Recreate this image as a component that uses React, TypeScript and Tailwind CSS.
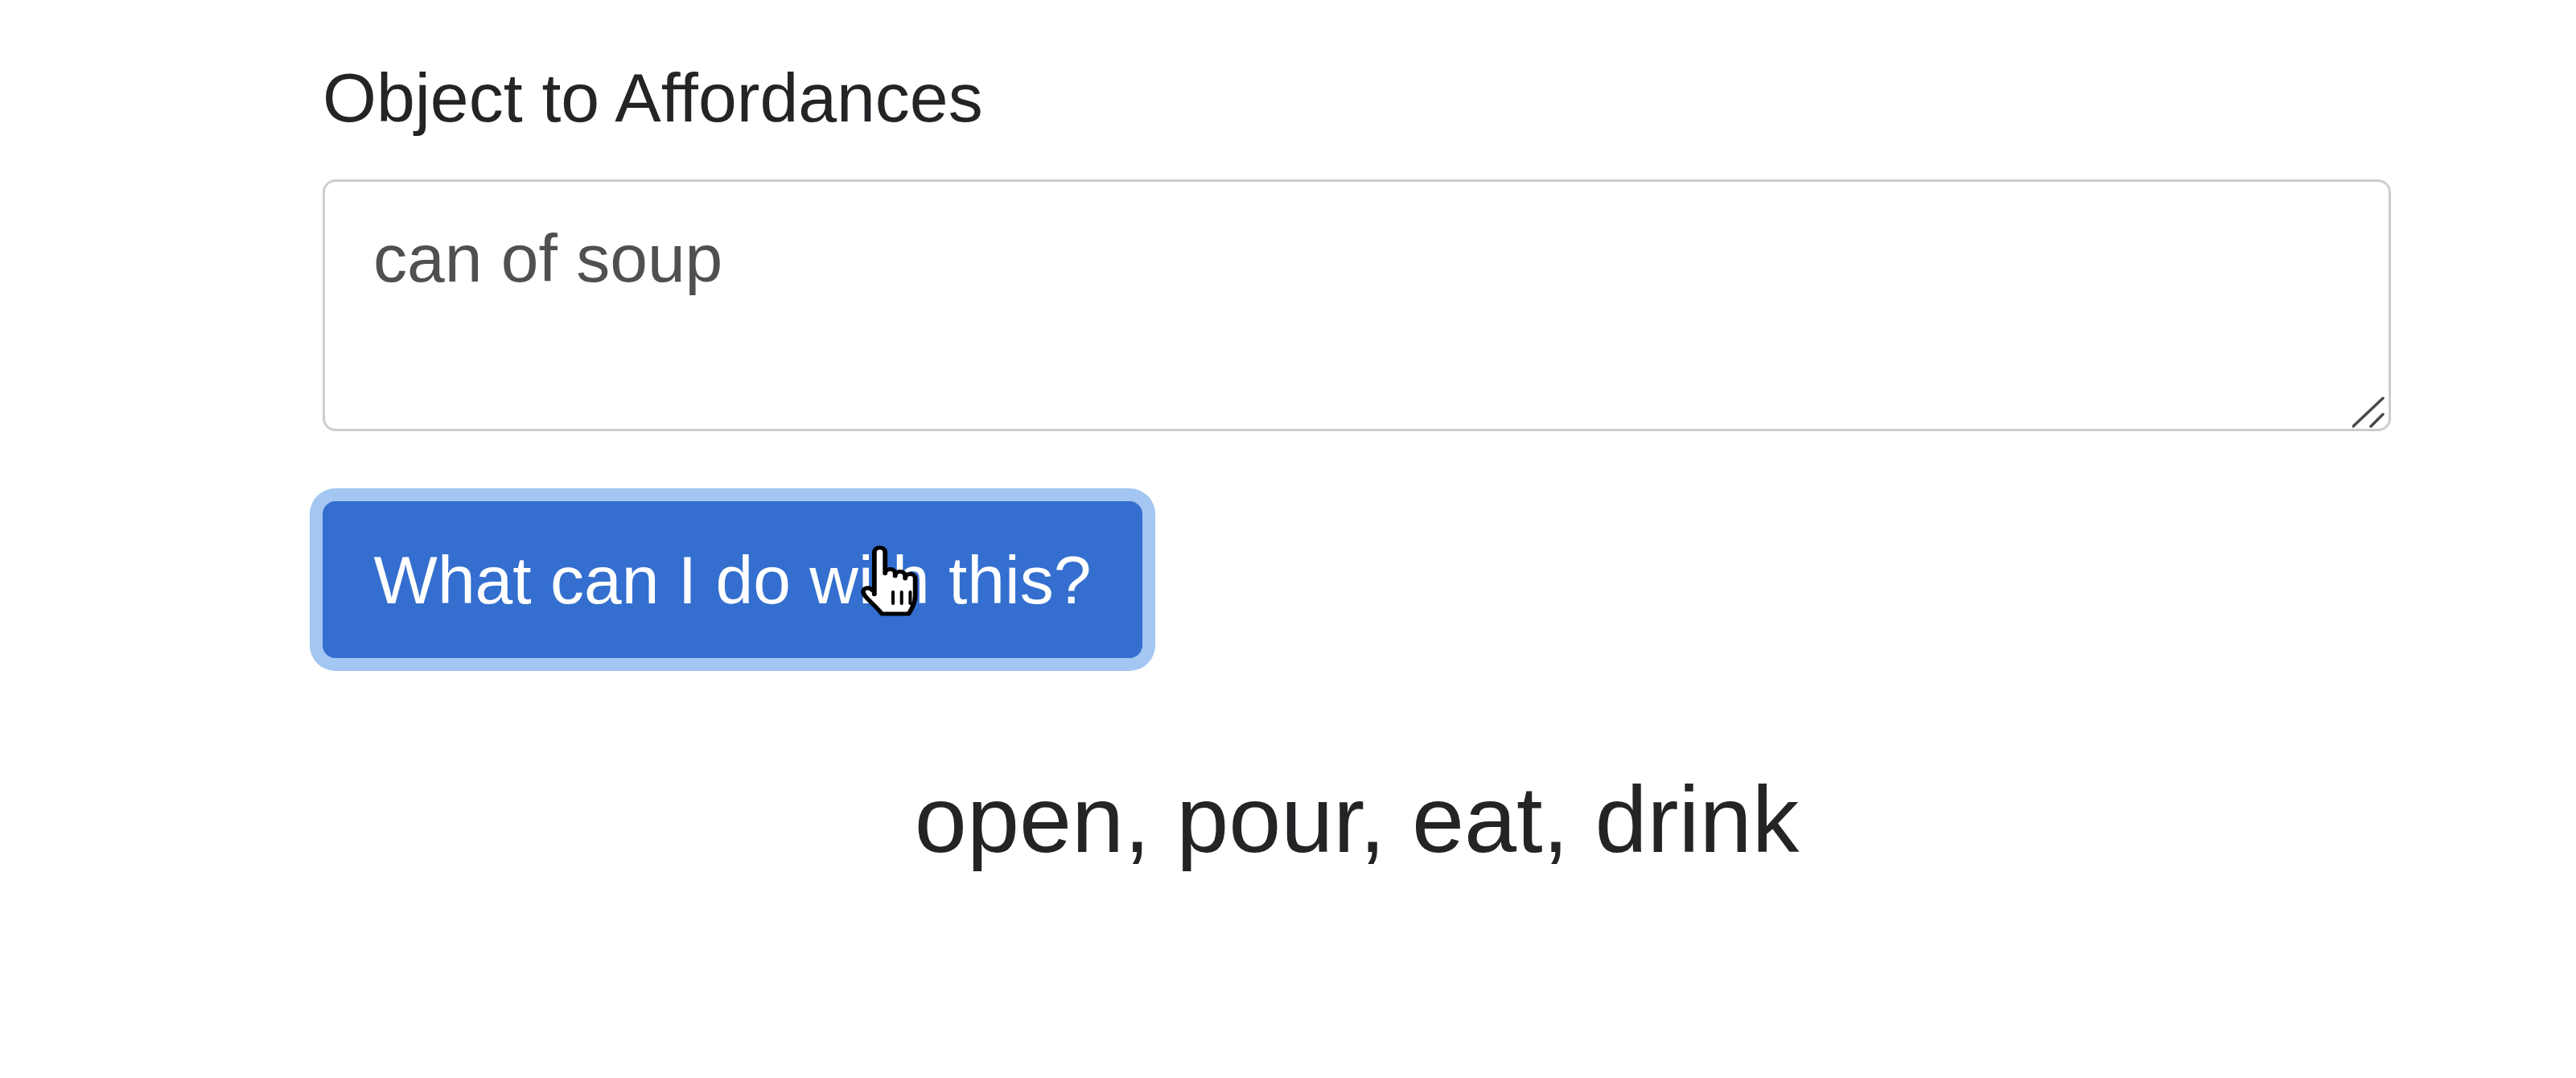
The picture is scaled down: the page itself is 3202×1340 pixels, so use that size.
import React from "react";

function HandCursor() {
  return (
    <svg
      className="absolute left-[668px] top-[55px] pointer-events-none"
      width="74"
      height="88"
      viewBox="1.2 0.1 16.6 23"
      preserveAspectRatio="none"
      fill="none"
    >
      <path
        d="M5.2 2.3 a1.5 1.5 0 0 1 3 0 V9.2 a1.4 1.4 0 0 1 2.8 0 V10 a1.4 1.4 0 0 1 2.8 0 V10.8 a1.4 1.4 0 0 1 2.8 0 V16.5 c0 2.6 -1.2 4.5 -1.8 5.8 H7.3 c-1 -1.6 -2.6 -3.2 -4.2 -5.1 c-1 -1.2 -1.4 -2.4 -0.6 -3 c0.8 -0.6 1.8 -0.1 2.7 1 L5.2 16 Z"
        fill="#ffffff"
        stroke="#000000"
        strokeWidth="1.3"
        strokeLinejoin="round"
      />
      <path
        d="M10.4 15.2 V19 M12.8 15.2 V19 M15.2 15.2 V19"
        stroke="#000000"
        strokeWidth="0.9"
        strokeLinecap="round"
      />
    </svg>
  );
}

export default function App() {
  return (
    <div
      className="min-h-[1340px] w-full bg-white"
      style={{ fontFamily: '"Liberation Sans", Arial, sans-serif' }}
    >
      <div className="ml-[401px] w-[2571px] pt-[58px] flex flex-col">
        <label className="text-[86px] leading-[126px] text-[#222426]">
          Object to Affordances
        </label>

        <div className="relative mt-[39px] h-[313px]">
          <textarea
            className="block w-full h-full border-[3px] border-[#cdcdcd] rounded-[16px] bg-white pt-[32px] px-[60px] text-[84px] leading-[126px] text-[#505050] resize-none outline-none"
            style={{ fontFamily: '"Liberation Sans", Arial, sans-serif' }}
            defaultValue="can of soup"
            readOnly
          />
          <svg
            className="absolute right-[8px] bottom-[4px]"
            width="40"
            height="40"
            viewBox="0 0 40 40"
          >
            <path
              d="M1 38 L38 3 M23 38 L38 23"
              stroke="#4a4a4a"
              strokeWidth="3.5"
              strokeLinecap="round"
            />
          </svg>
        </div>

        <div className="mt-[87px] flex">
          <button
            className="relative w-[1019px] h-[195px] rounded-[16px] bg-[#346fcf] text-white text-[84px] leading-[126px] text-center shadow-[0_0_0_16px_#a3c6f2]"
            style={{ fontFamily: '"Liberation Sans", Arial, sans-serif' }}
          >
            What can I do with this?
            <HandCursor />
          </button>
        </div>

        <h3 className="mt-[130px] text-center text-[117px] leading-[142px] text-[#222426]">
          open, pour, eat, drink
        </h3>
      </div>
    </div>
  );
}
